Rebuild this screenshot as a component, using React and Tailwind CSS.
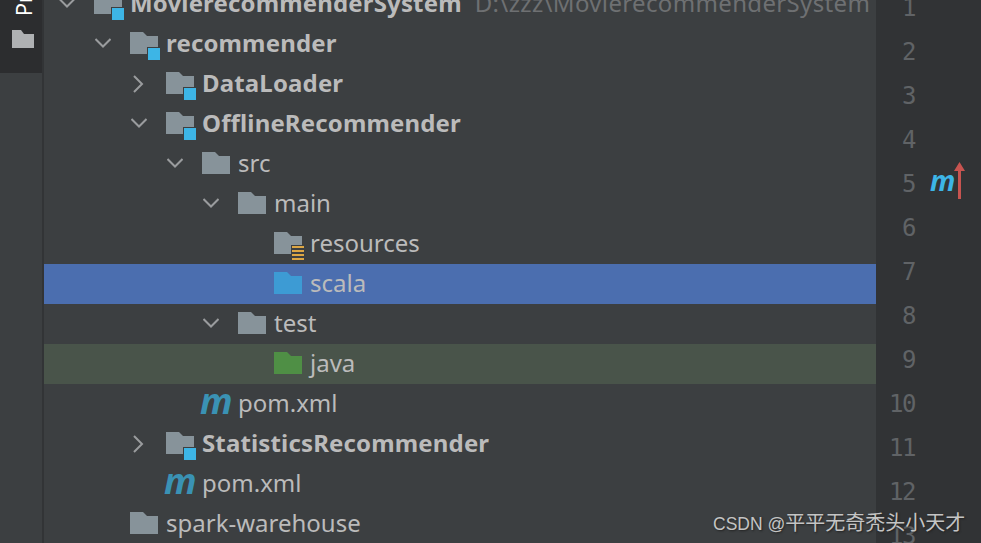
const FOLDER = "M0 0H13L17 4H28V22H0Z";

function Folder({ color = "#87939a", badge }) {
  return (
    <span className="relative block w-[28px] h-[22px]">
      <svg width="28" height="22" viewBox="0 0 28 22" className="block">
        <path d={FOLDER} fill={color} />
      </svg>
      {badge === "module" && (
        <span className="absolute left-[17px] top-[15px] w-[14px] h-[14px] bg-[#3c3f41] p-[1px]">
          <span className="block w-[12px] h-[12px] bg-[#3db5e6]" />
        </span>
      )}
      {badge === "res" && (
        <svg width="14" height="16" viewBox="0 0 14 16" className="absolute left-[17px] top-[13px]">
          <rect width="14" height="16" fill="#3c3f41" />
          <g fill="#dca644">
            <rect x="1" y="1" width="12" height="2" />
            <rect x="1" y="5" width="12" height="2" />
            <rect x="1" y="9" width="12" height="2" />
            <rect x="1" y="13" width="12" height="2" />
          </g>
        </svg>
      )}
    </span>
  );
}

function Chevron({ open }) {
  return (
    <svg width="16" height="18" viewBox="0 0 16 18" className="block" fill="none" stroke="#9a9c9e" strokeWidth="2">
      {open ? <path d="M0.5 4L8 11.5L15.5 4" /> : <path d="M3 1L11 9L3 17" />}
    </svg>
  );
}

function Row({ pad, chevron, icon, bold, bg = "", note, children }) {
  return (
    <div className={`h-[40px] flex items-center shrink-0 ${pad} ${bg}`}>
      <span className="w-[36px] h-[40px] flex items-center pl-[1px] pb-[1px] shrink-0">
        {chevron && <Chevron open={chevron === "open"} />}
      </span>
      <span className="w-[36px] shrink-0 flex items-center pb-[2px]">{icon}</span>
      <span className={`text-[24px] leading-[38px] pb-[2px] whitespace-nowrap text-[#bbbbbb] ${bold ? "font-bold tracking-[0.15px]" : ""}`}>
        {children}
      </span>
      {note && <span className="ml-[13px] text-[24px] tracking-[0.35px] leading-[38px] pb-[2px] whitespace-nowrap text-[#6e7072]">{note}</span>}
    </div>
  );
}

function MavenIcon() {
  return (
    <span className="block h-[38px] leading-[34px] -ml-[2px] text-[36px] font-bold italic text-[#3a92b4] font-['Open_Sans',sans-serif]">
      m
    </span>
  );
}

const lines = [1, 2, 3, 4, 5, 6, 7, 8, 9, 10, 11, 12, 13];

export default function App() {
  return (
    <div className="relative w-[981px] h-[543px] overflow-hidden flex bg-[#3c3f41] font-['Noto_Sans',sans-serif]">
      <aside className="w-[44px] shrink-0 h-full bg-[#3c3f41] border-r-2 border-[#323436]">
        <div className="h-[73px] bg-[#2c2d2f] overflow-hidden">
          <div className="h-[30px] flex items-start justify-center pl-[4px]">
            <span className="block text-[22px] leading-[24px] whitespace-nowrap text-white -rotate-90 -translate-y-[7px]">
              Pr
            </span>
          </div>
          <div className="pl-[12px]">
            <svg width="22" height="18" viewBox="0 0 22 18" className="block">
              <path d="M0 0H9L12 4H22V18H0Z" fill="#afb1b3" />
            </svg>
          </div>
        </div>
      </aside>

      <main className="w-[832px] shrink-0 h-full overflow-hidden">
        <div className="-mt-[16px] flex flex-col">
          <Row pad="pl-[14px]" chevron="open" icon={<Folder badge="module" />} bold note="D:\zzz\MovierecommenderSystem">
            MovierecommenderSystem
          </Row>
          <Row pad="pl-[50px]" chevron="open" icon={<Folder badge="module" />} bold>recommender</Row>
          <Row pad="pl-[86px]" chevron="closed" icon={<Folder badge="module" />} bold>DataLoader</Row>
          <Row pad="pl-[86px]" chevron="open" icon={<Folder badge="module" />} bold>OfflineRecommender</Row>
          <Row pad="pl-[122px]" chevron="open" icon={<Folder />}>src</Row>
          <Row pad="pl-[158px]" chevron="open" icon={<Folder />}>main</Row>
          <Row pad="pl-[194px]" icon={<Folder badge="res" />}>resources</Row>
          <Row pad="pl-[194px]" bg="bg-[#4b6eaf]" icon={<Folder color="#3d9bd4" />}>scala</Row>
          <Row pad="pl-[158px]" chevron="open" icon={<Folder />}>test</Row>
          <Row pad="pl-[194px]" bg="bg-[#49544a]" icon={<Folder color="#4f8f45" />}>java</Row>
          <Row pad="pl-[122px]" icon={<MavenIcon />}>pom.xml</Row>
          <Row pad="pl-[86px]" chevron="closed" icon={<Folder badge="module" />} bold>StatisticsRecommender</Row>
          <Row pad="pl-[86px]" icon={<MavenIcon />}>pom.xml</Row>
          <Row pad="pl-[50px]" icon={<Folder />}>spark-warehouse</Row>
        </div>
      </main>

      <section className="flex-1 h-full overflow-hidden bg-[#313335]">
        <div className="-mt-[14px] flex flex-col">
          {lines.map((n) => (
            <div key={n} className="relative h-[44px] shrink-0 flex items-center">
              <span className="w-[39px] shrink-0 text-right text-[24px] leading-[44px] text-[#606366] font-['DejaVu_Sans_Mono',monospace] tracking-[-1.5px]">
                {n}
              </span>
              {n === 5 && (
                <span className="ml-[15px] flex items-center">
                  <span className="-mt-[8px] text-[28px] leading-[30px] font-bold italic text-[#3db5e6] font-['Open_Sans',sans-serif]">m</span>
                  <svg width="11" height="38" viewBox="0 0 11 38" className="block -ml-[1px] -mt-[6px]">
                    <path d="M5.5 0L11 9H7V37H4V9H0Z" fill="#c75450" />
                  </svg>
                </span>
              )}
            </div>
          ))}
        </div>
      </section>

      <div className="absolute left-[713px] top-[509px] text-[20px] leading-[28px] whitespace-nowrap text-[#c4c4c4] [text-shadow:1px_1px_2px_#222] font-['Liberation_Sans','Noto_Sans_CJK_SC',sans-serif]">
        <span className="text-[17.5px]">CSDN @</span>平平无奇秃头小天才
      </div>
    </div>
  );
}
